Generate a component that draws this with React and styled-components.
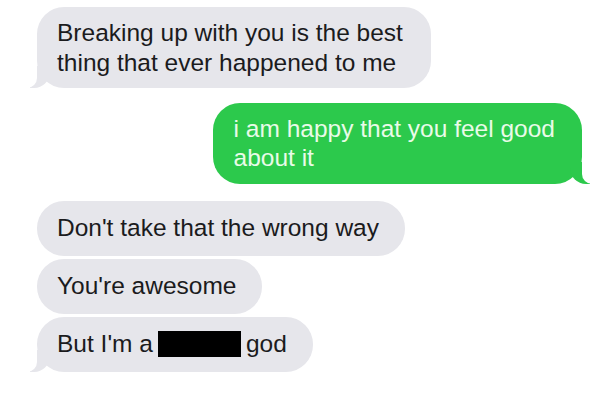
import React from "react";
import styled, { createGlobalStyle, css } from "styled-components";

const Global = createGlobalStyle`
  html, body { margin: 0; padding: 0; background: #ffffff; }
  body { font-family: "Liberation Sans", Arial, sans-serif; }
`;

const Thread = styled.div`
  width: 600px;
  height: 413px;
  box-sizing: border-box;
  padding: 7px 18px 0 37px;
  display: flex;
  flex-direction: column;
`;

const Group = styled.div`
  display: flex;
  flex-direction: column;
  gap: 3px;
  margin-bottom: ${(p) => p.$after || 0}px;
  align-items: ${(p) => (p.$sent ? "flex-end" : "flex-start")};
`;

const GREY = "#e6e6eb";
const GREEN = "#2cc94c";

const Bubble = styled.div`
  position: relative;
  box-sizing: border-box;
  border-radius: 27px;
  font-size: 24.5px;
  background: ${(p) => (p.$sent ? GREEN : GREY)};
  color: ${(p) => (p.$sent ? "#e9fbe8" : "#1b1b1d")};
  ${(p) =>
    p.$sent
      ? css`
          line-height: 28.5px;
          padding: 12px 27px 12px 21px;
        `
      : css`
          line-height: 30px;
          padding: ${p.$tall ? "11px 28px 10px 20px" : "12px 26px 13px 20px"};
        `}

  ${(p) =>
    p.$tail &&
    !p.$sent &&
    css`
      &::before {
        content: "";
        position: absolute;
        z-index: 0;
        bottom: 0;
        left: -7px;
        width: 20px;
        height: 22px;
        background: ${GREY};
        border-bottom-right-radius: 16px;
      }
      &::after {
        content: "";
        position: absolute;
        z-index: 1;
        bottom: 0;
        left: -10px;
        width: 10px;
        height: 22px;
        background: #ffffff;
        border-bottom-right-radius: 10px;
      }
    `}
  ${(p) =>
    p.$tail &&
    p.$sent &&
    css`
      &::before {
        content: "";
        position: absolute;
        z-index: 0;
        bottom: 0;
        right: -8px;
        width: 20px;
        height: 22px;
        background: ${GREEN};
        border-bottom-left-radius: 16px;
      }
      &::after {
        content: "";
        position: absolute;
        z-index: 1;
        bottom: 0;
        right: -11px;
        width: 11px;
        height: 22px;
        background: #ffffff;
        border-bottom-left-radius: 10px;
      }
    `}
`;

const Text = styled.span`
  position: relative;
  z-index: 2;
`;

const Redacted = styled.span`
  display: inline-block;
  width: 83px;
  height: 26px;
  background: #000;
  vertical-align: -4.5px;
  margin: 0 5px 0 5px;
`;

export default function App() {
  return (
    <>
      <Global />
      <Thread>
        <Group $after={15}>
          <Bubble $tail $tall>
            <Text>
              Breaking up with you is the best
              <br />
              thing that ever happened to me
            </Text>
          </Bubble>
        </Group>
        <Group $sent $after={17}>
          <Bubble $sent $tail>
            <Text>
              i am happy that you feel good
              <br />
              about it
            </Text>
          </Bubble>
        </Group>
        <Group>
          <Bubble>
            <Text>Don't take that the wrong way</Text>
          </Bubble>
          <Bubble>
            <Text>You're awesome</Text>
          </Bubble>
          <Bubble $tail>
            <Text>
              But I'm a<Redacted />god
            </Text>
          </Bubble>
        </Group>
      </Thread>
    </>
  );
}
